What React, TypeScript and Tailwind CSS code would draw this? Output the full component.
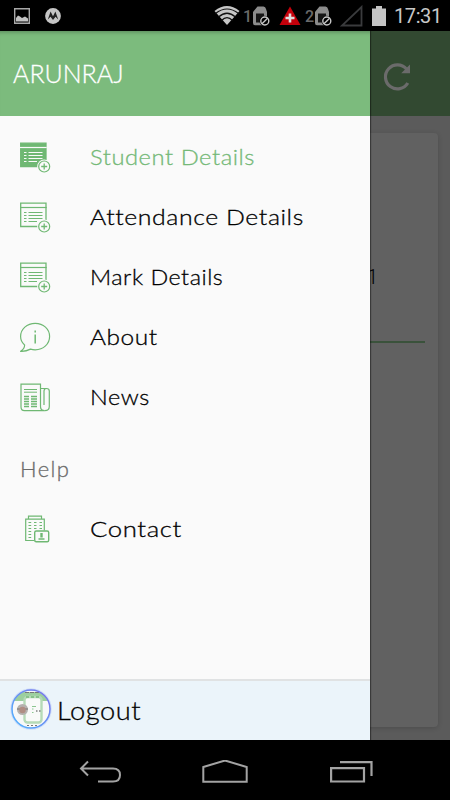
import type { ReactNode } from "react";

type MenuItem = {
  label: string;
  icon: ReactNode;
  className: string;
};

function SimIcon() {
  return (
    <svg className="h-5 w-[18px] shrink-0" viewBox="0 0 18 20" fill="none">
      <path d="M1 6 5.500 .5H11.500Q13.500 .5 14 3L15 6V17Q15 19.300 13 19.300H3Q1 19.300 1 17Z" fill="#8c8c8c" />
      <path d="M4 7.500H12V16.500H4Z" fill="#151515" />
      <circle cx="12.800" cy="15" r="5.300" fill="#000" />
      <circle cx="12.800" cy="15" r="4" stroke="#c8c8c8" strokeWidth="1.400" />
      <path d="m10 17.800 5.600-5.600" stroke="#c8c8c8" strokeWidth="1.400" />
    </svg>
  );
}

function StatusBar() {
  return (
    <div className="flex h-[31px] w-full items-center bg-black pl-[14px]">
      <svg className="h-4 w-4" viewBox="0 0 16 16" fill="none">
        <path d="M.7.700H15.300V15.300H.7Z" stroke="#a8a8a8" strokeWidth="1.400" />
        <path d="M2 13.500V10L4 7.500 6 8.500 8 10 11 8.500 14 10.500V13.500Z" fill="#c2c2c2" />
      </svg>
      <svg className="ml-[15px] h-4 w-4" viewBox="0 0 16 16">
        <circle cx="8" cy="8" r="7.900" fill="#c6c6c6" />
        <path d="M2.800 11.500 5.600 3.500 8 8.300 10.400 3.500 13.200 11.500 10.500 8.800 8 12 5.500 8.800Z" fill="#222" />
      </svg>
      <svg className="ml-[153px] h-[19px] w-[26px] shrink-0" viewBox="0 0 26 19">
        <path d="M.5 5Q13-5 25.500 5L13 19Z" fill="#c6c6c6" />
        <path
          d="M1.500 7.500Q13-1.500 24.500 7.500M4.500 11Q13 3.500 21.500 11M7.500 14.500Q13 9 18.500 14.500"
          fill="none"
          stroke="#111"
          strokeWidth="1.200"
        />
      </svg>
      <span className="ml-[3px] mt-[3px] w-[9px] shrink-0 font-['Roboto',sans-serif] text-[16px] leading-none font-medium text-[#6a6a6a]">1</span>
      <SimIcon />
      <svg className="ml-[9px] h-5 w-[22px] shrink-0" viewBox="0 0 22 20">
        <path d="M11 .5 21.500 19H.5Z" fill="#c4000b" />
        <path d="M11 7.500V16.500M6.500 12H15.500" stroke="#ddd" strokeWidth="2.600" />
      </svg>
      <span className="ml-[4px] mt-[3px] w-[9px] shrink-0 font-['Roboto',sans-serif] text-[16px] leading-none font-medium text-[#6a6a6a]">2</span>
      <SimIcon />
      <svg className="ml-[7px] h-[22px] w-6 shrink-0" viewBox="0 0 24 22" fill="none">
        <path d="M22.500 2V20.500H3Z" stroke="#3a3b3d" strokeWidth="1.800" />
      </svg>
      <svg className="ml-[9px] h-5 w-[14px] shrink-0" viewBox="0 0 14 20">
        <path d="M4 0H10V2.500H14V20H0V2.500H4Z" fill="#c4c4c4" />
      </svg>
      <span className="mt-px ml-[8px] font-['Roboto',sans-serif] text-[20px] leading-none tracking-[-0.4px] font-normal text-[#c8c8c8]">17:31</span>
    </div>
  );
}

function ListIcon({ filled = false }: { filled?: boolean }) {
  const line = filled ? "#fafafa" : "#6fb873";
  return (
    <svg className="h-[31px] w-[31px]" viewBox="0 0 31 31" fill="none" stroke="#6fb873">
      <path d="M.7 1.200H26V24.500H.7Z" fill={filled ? "#6fb873" : "none"} strokeWidth="1.300" />
      <path d="M0 5.500H26.700" stroke={line} strokeWidth="1.200" />
      <path
        d="M4 10.500H6.500M8.500 10.500H22.500M4 13.500H6.500M8.500 13.500H22.500M4 16.500H6.500M8.500 16.500H22.500M4 19.500H6.500M8.500 19.500H17"
        stroke={line}
        strokeWidth="1.200"
      />
      <circle cx="24.200" cy="24.500" r="7" fill="#fafafa" stroke="none" />
      <circle cx="24.200" cy="24.500" r="5.500" strokeWidth="1.200" />
      <path d="M24.200 21.500V27.500M21.200 24.500H27.200" strokeWidth="1.300" />
    </svg>
  );
}

function AboutIcon() {
  return (
    <svg className="h-[31px] w-[31px]" viewBox="0 0 31 31" fill="none" stroke="#6fb873" strokeWidth="1.200">
      <path d="M4.600 23C2 20.700.6 17.800.6 14.500.6 7.200 7 1.300 15.200 1.300S29.600 7.200 29.600 14.500 23.500 27.800 15.200 27.800Q12.800 27.800 10.500 27.100C7.300 28.800 4 29.500.7 29.300 3 27.700 4.700 25.500 4.600 23Z" />
      <path d="M15.200 8.500V10.500M15.200 12.500V21.500" strokeWidth="1.500" />
    </svg>
  );
}

function NewsIcon() {
  return (
    <svg className="h-[31px] w-[31px]" viewBox="0 0 31 31" fill="none" stroke="#6fb873" strokeWidth="1.200">
      <path d="M1 2.200H20.500V24.500Q20.500 28.600 24.800 28.600H4.500Q1 28.600 1 25Z" />
      <path d="M20.500 6.500H26.500Q29.300 6.500 29.300 9V24.500Q29.300 28.600 24.800 28.600M24 22.500V9Q24 6.500 26.500 6.500M24 10V23" />
      <path d="M4 7.500H17M4 10.200H17" strokeWidth="1" />
      <path
        d="M4 14.500H9M11 14.500H17M4 17H9M11 17H17M4 19.500H9M11 19.500H17M4 22H9M11 22H17M4 24.500H9M11 24.500H17"
        strokeWidth="1.300"
      />
    </svg>
  );
}

function ContactIcon() {
  return (
    <svg className="ml-[5px] h-[28px] w-[25px]" viewBox="0 0 25 28" fill="none" stroke="#6fb873" strokeWidth="1.200">
      <path d="M9 25.500H.7V4.200H19.300V15.500M3.500 4V1.200H16.500V4" />
      <path
        d="M3.500 7.500H6.200M9 7.500H11.500M14.500 7.500H17M3.500 10.500H6.200M9 10.500H11.500M14.500 10.500H17M3.500 13.500H6.200M9 13.500H11.500M14.500 13.500H17M3.500 16.500H6.200M3.500 19.500H6.200M3.500 22.500H6.200"
        strokeWidth="1.100"
      />
      <rect x="9.700" y="16" width="14" height="10.700" rx="1.500" fill="#fafafa" strokeWidth="1.400" />
      <path d="M16.500 18V22.500" strokeWidth="2.400" />
      <path d="M13.500 24H19.500" strokeWidth="1.500" />
    </svg>
  );
}

const items: MenuItem[] = [
  { label: "Student Details", icon: <ListIcon filled />, className: "scale-x-[1.08] text-[#74b977]" },
  { label: "Attendance Details", icon: <ListIcon />, className: "scale-x-[1.13] text-black" },
  { label: "Mark Details", icon: <ListIcon />, className: "scale-x-[1.06] text-black" },
  { label: "About", icon: <AboutIcon />, className: "scale-x-[1.11] text-black" },
  { label: "News", icon: <NewsIcon />, className: "scale-x-[1.07] text-black" },
];

function MenuRow({ item }: { item: MenuItem }) {
  return (
    <button className="flex h-[60px] w-full items-center pl-5">
      <span className="w-[70px] shrink-0">{item.icon}</span>
      <span
        className={`origin-left text-[22px] leading-none tracking-[0.5px] whitespace-nowrap [-webkit-text-stroke:0.3px] ${item.className}`}
      >
        {item.label}
      </span>
    </button>
  );
}

function Avatar() {
  return (
    <svg className="h-[42px] w-[42px] shrink-0" viewBox="0 0 42 42">
      <defs>
        <linearGradient id="ring" x1="0" y1="1" x2="1" y2="0">
          <stop offset="0" stopColor="#4fb6ff" />
          <stop offset="1" stopColor="#7d6fe8" />
        </linearGradient>
        <clipPath id="disc">
          <circle cx="21" cy="21" r="19" />
        </clipPath>
      </defs>
      <g clipPath="url(#disc)">
        <path d="M0 0H42V42H0Z" fill="#f7f8f8" />
        <path d="M0 4H42V13H0Z" fill="#9ccf9f" />
        <path d="M15 4.500H29" stroke="#777" strokeWidth="1.200" strokeDasharray="4 1" />
        <rect x="14.500" y="9" width="17" height="25.500" rx="3" fill="#f9faf9" stroke="#b5dab7" strokeWidth="2.400" />
        <path d="M16 9H30" stroke="#78bb7c" strokeWidth="1.600" strokeDasharray="3 2" />
        <circle cx="12.500" cy="21.500" r="5.500" fill="#b5b1ae" />
        <path d="M7 21H18" stroke="#8d8986" strokeWidth="1.500" />
        <circle cx="12.500" cy="22" r="3.200" fill="#b08d83" />
        <path d="M22 18.500H26M22 21H23.500M22 24.500H23.500" stroke="#8cc690" strokeWidth="1" />
        <path d="M26 23H27.500M29 23H30.500" stroke="#444" strokeWidth="1" />
        <path d="M17 37.500H28" stroke="#777" strokeWidth="1" strokeDasharray="2 2" />
      </g>
      <circle cx="21" cy="21" r="19.500" fill="none" stroke="#9db8f5" strokeWidth="2.400" opacity="0.35" />
      <circle cx="21" cy="21" r="19" fill="none" stroke="url(#ring)" strokeWidth="1.500" />
    </svg>
  );
}

function Drawer() {
  return (
    <aside className="absolute inset-y-0 left-0 flex w-[370px] flex-col bg-[#fafafa] shadow-[1px_0_1px_rgba(0,0,0,0.4)]">
      <header className="flex h-[85px] items-center bg-[#7cbb7d] pl-[13px] shadow-[inset_0_5px_4px_-4px_rgba(0,0,0,0.3)]">
        <h1 className="text-[25px] leading-none text-white [-webkit-text-stroke:0.3px]">ARUNRAJ</h1>
      </header>
      <nav className="flex-1 pt-[11px]">
        {items.map((item) => (
          <MenuRow key={item.label} item={item} />
        ))}
        <h2 className="mt-3 flex h-[60px] origin-left items-center pl-5 text-[22px] leading-none tracking-[1.4px] text-[#6b6b6b] [-webkit-text-stroke:0.3px]">
          Help
        </h2>
        <MenuRow item={{ label: "Contact", icon: <ContactIcon />, className: "scale-x-[1.17] text-black" }} />
      </nav>
      <button className="flex h-[61px] items-center border-t-2 border-[#e0e2e3] bg-[#ebf4fa] pb-[3px] pl-[10px]">
        <Avatar />
        <span className="mt-[2px] ml-[5px] origin-left scale-x-[1.09] text-[25px] leading-none tracking-[0.5px] text-black [-webkit-text-stroke:0.3px]">
          Logout
        </span>
      </button>
    </aside>
  );
}

function PageBehind() {
  return (
    <div className="flex h-full flex-col bg-[#5b5b5b]">
      <div className="flex h-[85px] items-center justify-end bg-[#324931] pt-[7px] pr-[38px]">
        <svg className="h-[30px] w-[30px]" viewBox="0 0 30 30" fill="none">
          <path d="M25.800 21A12 12 0 1 1 24.500 7" stroke="#6b6b6b" strokeWidth="3.200" />
          <path d="M28 2.500V11.300H19.200Z" fill="#6b6b6b" />
        </svg>
      </div>
      <div className="mt-[17px] mr-[12px] mb-[13px] flex flex-1 flex-col items-end rounded-[4px] bg-[#616161] pr-[13px] shadow-[0_1px_5px_rgba(0,0,0,0.16)]">
        <span className="mt-[133px] mr-[47px] font-['Roboto',sans-serif] text-[20px] leading-[22px] font-light text-black">1</span>
        <div className="mt-[53px] h-[2px] w-full bg-[#3a523b]" />
      </div>
    </div>
  );
}

function NavigationBar() {
  return (
    <div className="flex h-[60px] items-center bg-black pt-[4px] pl-[79px]">
      <svg className="h-6 w-[43px]" viewBox="0 0 43 24" fill="none" stroke="#a3a3a3" strokeWidth="2">
        <path d="M2 8.500H34Q41 8.500 41 15T34 21.500H19M9 1.500 2 8.500 9 15.500" />
      </svg>
      <svg className="ml-[80px] h-6 w-[46px]" viewBox="0 0 46 24" fill="none" stroke="#a3a3a3" strokeWidth="2">
        <path d="M1.300 7 23 .5 44.700 7V21.800H1.300Z" />
      </svg>
      <svg className="ml-[82px] h-6 w-[43px]" viewBox="0 0 43 24" fill="none" stroke="#a3a3a3" strokeWidth="2.200">
        <path d="M1.100 8.200H34V21.500H1.100ZM10 2.200H41.500V16" />
      </svg>
    </div>
  );
}

export default function App() {
  return (
    <div className="flex h-[800px] w-[450px] flex-col overflow-hidden bg-black font-['Lato','Liberation_Sans',sans-serif] font-light">
      <StatusBar />
      <main className="relative min-h-0 flex-1 overflow-hidden">
        <PageBehind />
        <Drawer />
      </main>
      <NavigationBar />
    </div>
  );
}
